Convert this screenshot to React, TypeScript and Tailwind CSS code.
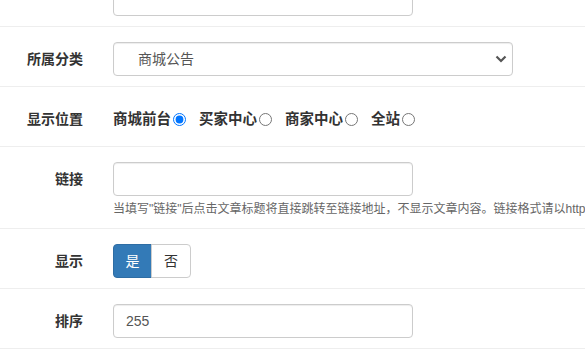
import React from 'react';

const font = { fontFamily: '"Liberation Sans", "Noto Sans CJK SC", sans-serif' };

const Row: React.FC<{ label?: string; children: React.ReactNode }> = ({ label, children }) => (
  <div className="flex border-b border-[#eee] pt-[15px] pb-[10px]">
    <div className="w-[83px] shrink-0 text-right text-[14px] font-bold leading-[34px] text-[#333]">{label}</div>
    <div className="ml-[30px] min-w-0 flex-1">{children}</div>
  </div>
);

const inputCls =
  'block h-[34px] w-[300px] rounded-[4px] border border-[#ccc] bg-white px-[12px] text-[14px] text-[#555] shadow-[inset_0_1px_1px_rgba(0,0,0,0.075)] outline-none';

const App: React.FC = () => {
  const places = ['商城前台', '买家中心', '商家中心', '全站'];

  return (
    <div className="h-[354px] w-[585px] overflow-hidden bg-white" style={font}>
      <div className="-mt-[33px]">
        <Row>
          <input className={inputCls} defaultValue="" />
        </Row>

        <Row label="所属分类">
          <div className="relative w-[400px]">
            <select className="block h-[34px] w-[400px] appearance-none rounded-[4px] border border-[#ccc] bg-white pl-[24px] text-[14px] text-[#555] shadow-[inset_0_1px_1px_rgba(0,0,0,0.075)] outline-none">
              <option>商城公告</option>
            </select>
            <svg className="pointer-events-none absolute right-[6px] top-[13px]" width="12" height="8" viewBox="0 0 12 8">
              <polyline points="1.5,1.5 6,6 10.5,1.5" fill="none" stroke="#555" strokeWidth="2.2" />
            </svg>
          </div>
        </Row>

        <Row label="显示位置">
          <div className="flex h-[34px] items-center text-[14.5px] font-bold text-[#333]">
            {places.map((p, i) => (
              <label key={p} className="mr-[13px] flex items-center">
                <span className="leading-[20px]">{p}</span>
                <input type="radio" name="place" defaultChecked={i === 0} className="m-0 ml-[2px] h-[13px] w-[13px]" />
              </label>
            ))}
          </div>
        </Row>

        <Row label="链接">
          <input className={inputCls} defaultValue="" />
          <p className="mt-[5px] whitespace-nowrap text-[12px] leading-[17px] text-[#666]">
            当填写"链接"后点击文章标题将直接跳转至链接地址，不显示文章内容。链接格式请以http://开头
          </p>
        </Row>

        <Row label="显示">
          <div className="flex h-[34px] text-[14px]">
            <button className="h-[34px] w-[39px] rounded-l-[4px] border border-[#2e6da4] bg-[#337ab7] text-white">是</button>
            <button className="-ml-px h-[34px] w-[40px] rounded-r-[4px] border border-[#ccc] bg-white text-[#333]">否</button>
          </div>
        </Row>

        <Row label="排序">
          <input className={inputCls} defaultValue="255" />
        </Row>
      </div>
    </div>
  );
};

export default App;
